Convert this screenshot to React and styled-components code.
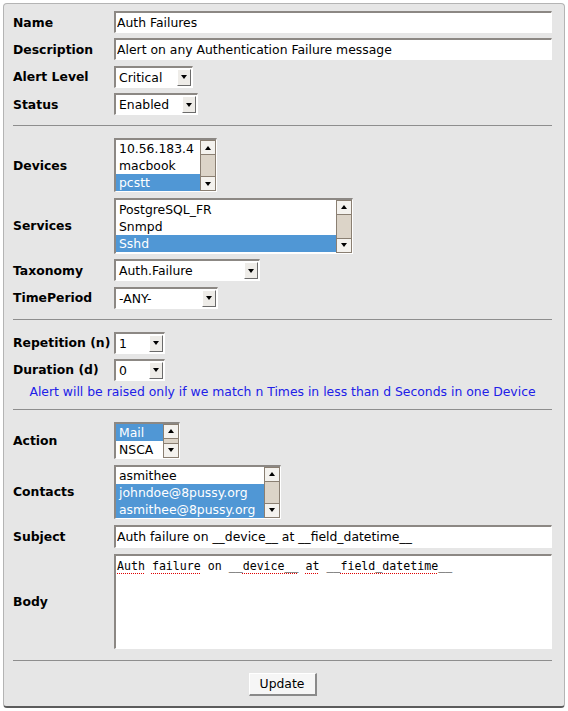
import React from 'react';
import styled, { createGlobalStyle } from 'styled-components';

const GlobalStyle = createGlobalStyle`
  body {
    margin: 0;
    background: #ffffff;
    font-family: "DejaVu Sans", Verdana, sans-serif;
    color: #000;
  }
`;

const Panel = styled.div`
  margin: 3px;
  width: 562px;
  box-sizing: border-box;
  background: #e6e6e6;
  border: 1px solid #b4b4b4;
  border-bottom: 2px solid #5c5c5c;
  border-radius: 4px;
  padding: 7px 12px 10px 9px;
`;

const Section = styled.div`
  display: grid;
  grid-template-columns: 101px 1fr;
  row-gap: ${p => p.$gap}px;
  align-items: center;
`;

const Label = styled.div`
  font-weight: bold;
  font-size: 12.4px;
  white-space: nowrap;
`;

const TextInput = styled.input`
  display: block;
  width: 100%;
  height: ${p => p.$h || 22}px;
  box-sizing: border-box;
  margin: 0;
  padding: 0 1px;
  background: #fff;
  border: none;
  border-top: 2px solid #8c8884;
  border-left: 2px solid #8c8884;
  border-right: 1px solid #fff;
  border-bottom: 1px solid #fff;
  font-family: "DejaVu Sans", Verdana, sans-serif;
  font-size: 12.4px;
  color: #000;
  outline: none;
`;

const SelectBox = styled.div`
  width: ${p => p.$w}px;
  height: 22px;
  box-sizing: border-box;
  display: flex;
  align-items: center;
  justify-content: space-between;
  background: #fff;
  border-top: 2px solid #8c8884;
  border-left: 2px solid #8c8884;
  border-right: 1px solid #fff;
  border-bottom: 1px solid #fff;
  padding: 0 1px 0 3px;
  font-size: 12.4px;
  white-space: nowrap;
`;

const DropButton = styled.span`
  width: 14px;
  height: 17px;
  box-sizing: border-box;
  display: flex;
  align-items: center;
  justify-content: center;
  background: #eeece8;
  border-top: 1px solid #fff;
  border-left: 1px solid #fff;
  border-right: 1px solid #6b6b6b;
  border-bottom: 1px solid #6b6b6b;
`;

const Triangle = styled.span`
  width: 0;
  height: 0;
  border-left: 3.5px solid transparent;
  border-right: 3.5px solid transparent;
  ${p => (p.$up ? 'border-bottom: 4px solid #000;' : 'border-top: 4px solid #000;')}
`;

const ListFrame = styled.div`
  width: ${p => p.$w}px;
  box-sizing: border-box;
  display: flex;
  background: #fff;
  border-top: 2px solid #8c8884;
  border-left: 2px solid #8c8884;
  border-right: 1px solid #fff;
  border-bottom: 1px solid #fff;
`;

const Options = styled.div`
  flex: 1;
  overflow: hidden;
  padding: ${p => p.$pad || 0}px 0;
`;

const Option = styled.div`
  height: 17px;
  line-height: 17px;
  padding-left: 3px;
  font-size: 12.4px;
  white-space: nowrap;
  background: ${p => (p.$selected ? '#5097d5' : 'transparent')};
  color: ${p => (p.$selected ? '#fff' : '#000')};
`;

const Scrollbar = styled.div`
  width: 16px;
  box-sizing: border-box;
  display: flex;
  flex-direction: column;
  background: #dcd4c8;
  border-left: 1px solid #8a7f72;
  border-right: 1px solid #8a7f72;
`;

const ScrollButton = styled.div`
  height: 15px;
  box-sizing: border-box;
  display: flex;
  align-items: center;
  justify-content: center;
  background: #f4f2ee;
  border-top: 1px solid #8a7f72;
  border-bottom: 1px solid #8a7f72;
`;

const Track = styled.div`
  flex: 1;
`;

const Divider = styled.div`
  height: 1px;
  background: #8e8e8e;
  margin: ${p => p.$top}px 0 ${p => p.$bottom}px;
`;

const Note = styled.div`
  margin-top: 3px;
  line-height: 16px;
  text-align: center;
  color: #2020e8;
  font-size: 12.4px;
`;

const TextArea = styled.div`
  height: 95px;
  box-sizing: border-box;
  background: #fff;
  border-top: 2px solid #8c8884;
  border-left: 2px solid #8c8884;
  border-right: 1px solid #fff;
  border-bottom: 1px solid #fff;
  padding: 3px 1px 0;
  font-family: "DejaVu Sans Mono", monospace;
  font-size: 11.6px;
  line-height: 15px;
  white-space: pre;
`;

const Misspelled = styled.span`
  text-decoration-line: underline;
  text-decoration-style: dotted;
  text-decoration-color: #e00000;
  text-decoration-thickness: 1px;
  text-decoration-skip-ink: none;
  text-underline-offset: 3px;
`;

const Footer = styled.div`
  display: flex;
  justify-content: center;
`;

const Button = styled.button`
  width: 68px;
  height: 23px;
  box-sizing: border-box;
  margin: 0;
  padding: 0;
  background: #f6f6f6;
  border-top: 1px solid #fff;
  border-left: 1px solid #fff;
  border-right: 2px solid #8a8a8a;
  border-bottom: 2px solid #8a8a8a;
  font-family: "DejaVu Sans", Verdana, sans-serif;
  font-size: 12.4px;
  color: #000;
`;

const Select = ({ w, value }) => (
  <SelectBox $w={w}>
    <span>{value}</span>
    <DropButton><Triangle /></DropButton>
  </SelectBox>
);

const ListBox = ({ w, items, selected, pad }) => (
  <ListFrame $w={w}>
    <Options $pad={pad}>
      {items.map((it, i) => (
        <Option key={it} $selected={selected.includes(i)}>{it}</Option>
      ))}
    </Options>
    <Scrollbar>
      <ScrollButton><Triangle $up /></ScrollButton>
      <Track />
      <ScrollButton><Triangle /></ScrollButton>
    </Scrollbar>
  </ListFrame>
);

export default function App() {
  return (
    <>
      <GlobalStyle />
      <Panel>
        <Section $gap={5.4}>
          <Label>Name</Label>
          <TextInput readOnly value="Auth Failures" />
          <Label>Description</Label>
          <TextInput readOnly value="Alert on any Authentication Failure message" />
          <Label>Alert Level</Label>
          <Select w={79} value="Critical" />
          <Label>Status</Label>
          <Select w={84} value="Enabled" />
        </Section>

        <Divider $top={10} $bottom={12} />

        <Section $gap={5.5}>
          <Label>Devices</Label>
          <ListBox w={103} items={['10.56.183.4', 'macbook', 'pcstt']} selected={[2]} />
          <Label>Services</Label>
          <ListBox w={239} pad={1} items={['PostgreSQL_FR', 'Snmpd', 'Sshd']} selected={[2]} />
          <Label>Taxonomy</Label>
          <Select w={146} value="Auth.Failure" />
          <Label>TimePeriod</Label>
          <Select w={104} value="-ANY-" />
        </Section>

        <Divider $top={10} $bottom={12} />

        <Section $gap={5}>
          <Label>Repetition (n)</Label>
          <Select w={51} value="1" />
          <Label>Duration (d)</Label>
          <Select w={51} value="0" />
        </Section>
        <Note>Alert will be raised only if we match n Times in less than d Seconds in one Device</Note>

        <Divider $top={9} $bottom={12} />

        <Section $gap={6}>
          <Label>Action</Label>
          <ListBox w={66} items={['Mail', 'NSCA']} selected={[0]} />
          <Label>Contacts</Label>
          <ListBox
            w={167}
            items={['asmithee', 'johndoe@8pussy.org', 'asmithee@8pussy.org']}
            selected={[1, 2]}
          />
          <Label>Subject</Label>
          <TextInput $h={23} readOnly value="Auth failure on __device__ at __field_datetime__" />
          <Label>Body</Label>
          <TextArea>
            <Misspelled>Auth</Misspelled> <Misspelled>failure</Misspelled> on __<Misspelled>device__</Misspelled> <Misspelled>at</Misspelled> __<Misspelled>field_datetime</Misspelled>__
          </TextArea>
        </Section>

        <Divider $top={11} $bottom={12} />

        <Footer>
          <Button>Update</Button>
        </Footer>
      </Panel>
    </>
  );
}
